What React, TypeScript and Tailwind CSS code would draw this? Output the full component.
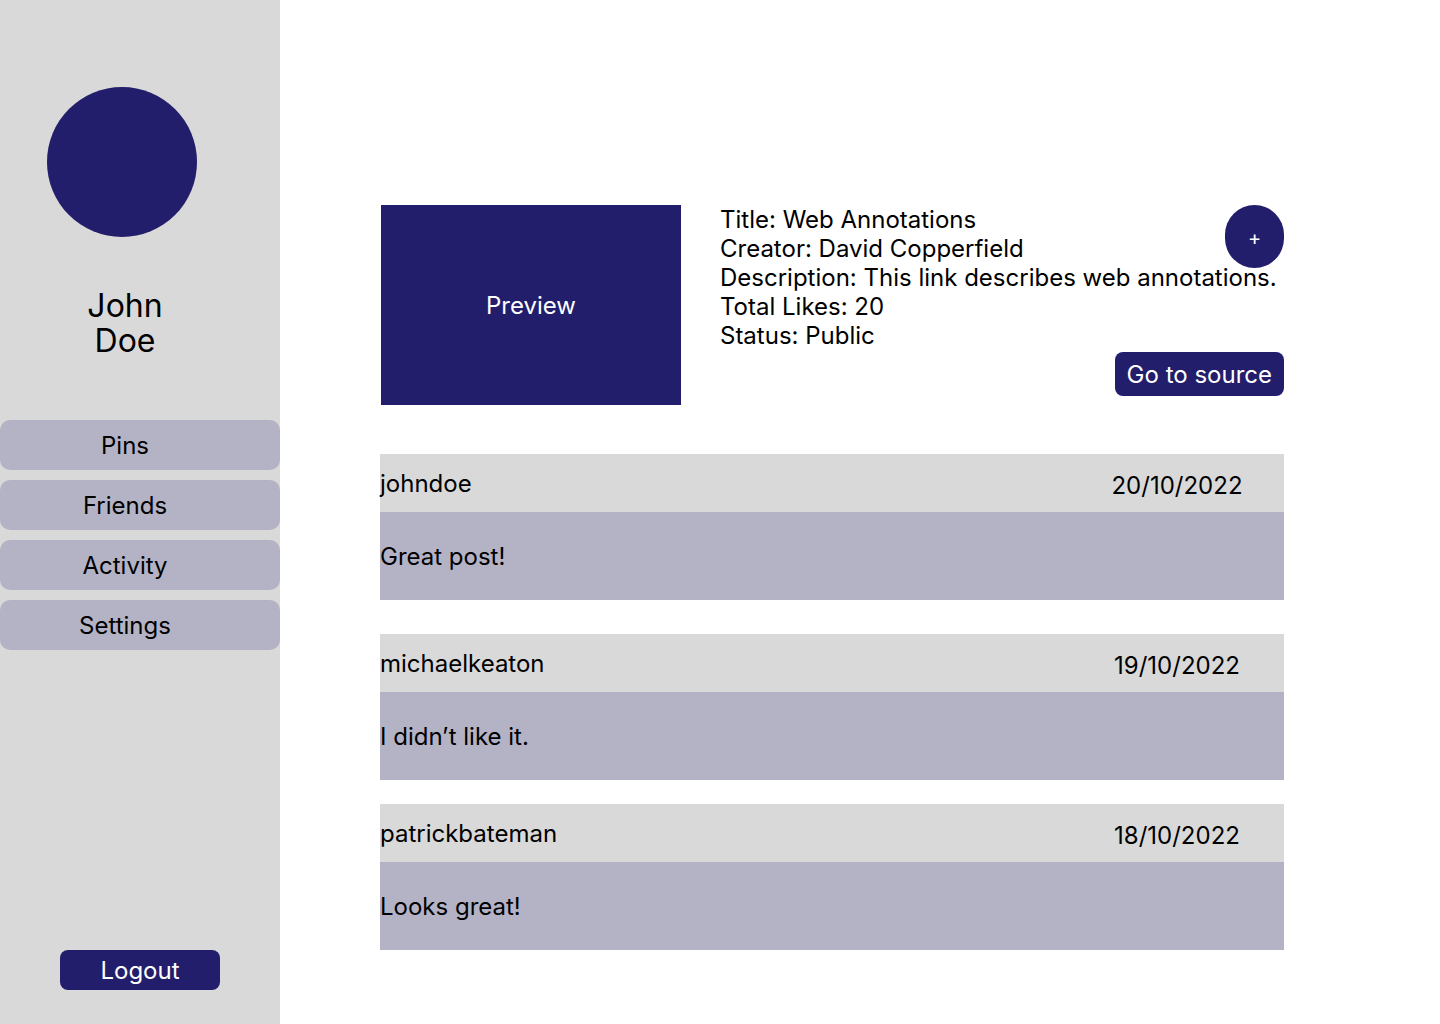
const comments = [
  { user: "johndoe", date: "20/10/2022", text: "Great post!", gap: "mt-0" },
  { user: "michaelkeaton", date: "19/10/2022", text: "I didn’t like it.", gap: "mt-[34px]" },
  { user: "patrickbateman", date: "18/10/2022", text: "Looks great!", gap: "mt-[24px]" },
];

const navItems = ["Pins", "Friends", "Activity", "Settings"];

function Sidebar() {
  return (
    <aside className="flex flex-col items-center w-[280px] shrink-0 bg-[#d9d9d9] min-h-[1024px]">
      <div className="mt-[87px] size-[150px] rounded-full bg-[#221e6b] mr-[36px]" />
      <p className="mt-[51px] w-[90px] mr-[30px] text-center text-[32px] leading-[35px] text-black">John Doe</p>
      <nav className="mt-[62px] flex flex-col gap-[10px] w-full">
        {navItems.map((item) => (
          <button
            key={item}
            className="h-[50px] w-full rounded-[10px] bg-[#b4b3c5] pr-[30px] pt-[2px] text-center text-[24px] text-black"
          >
            {item}
          </button>
        ))}
      </nav>
      <button className="mt-auto mb-[34px] h-[40px] w-[160px] rounded-[8px] bg-[#221e6b] pt-[1px] text-[24px] text-white">
        Logout
      </button>
    </aside>
  );
}

function LinkDetails() {
  return (
    <div className="flex gap-[39px] ml-[1px]">
      <div className="flex items-center justify-center w-[300px] h-[200px] shrink-0 bg-[#221e6b] pt-[1px] text-[24px] text-white">
        Preview
      </div>
      <div className="relative flex flex-col flex-1 text-[24px] leading-[29px] text-black">
        <p>Title: Web Annotations</p>
        <p>Creator: David Copperfield</p>
        <p className="whitespace-nowrap">Description: This link describes web annotations.</p>
        <p>Total Likes: 20</p>
        <p>Status: Public</p>
        <button className="self-end mt-[2px] h-[44px] rounded-[8px] bg-[#221e6b] px-[12px] text-[24px] text-white">
          Go to source
        </button>
        <button className="absolute top-0 right-0 flex items-center justify-center w-[59px] h-[63px] rounded-full bg-[#221e6b] pt-[4px] text-[20px] text-white">
          +
        </button>
      </div>
    </div>
  );
}

function Comment({ user, date, text, gap }: { user: string; date: string; text: string; gap: string }) {
  return (
    <div className={`${gap} flex flex-col text-[24px] text-black`}>
      <div className="flex items-center justify-between h-[58px] bg-[#d9d9d9]">
        <span className="pt-[2px]">{user}</span>
        <span className="w-[150px] mr-[32px] pt-[5px] text-center">{date}</span>
      </div>
      <div className="flex items-center h-[88px] bg-[#b4b3c5] pt-[2px]">
        <span>{text}</span>
      </div>
    </div>
  );
}

export default function App() {
  return (
    <div className="flex w-full min-h-[1024px] bg-white font-['Inter','Noto_Sans',sans-serif]">
      <Sidebar />
      <main className="flex flex-col w-[904px] ml-[100px] pt-[205px]">
        <LinkDetails />
        <section className="mt-[49px] flex flex-col">
          {comments.map((c) => (
            <Comment key={c.user} {...c} />
          ))}
        </section>
      </main>
    </div>
  );
}
